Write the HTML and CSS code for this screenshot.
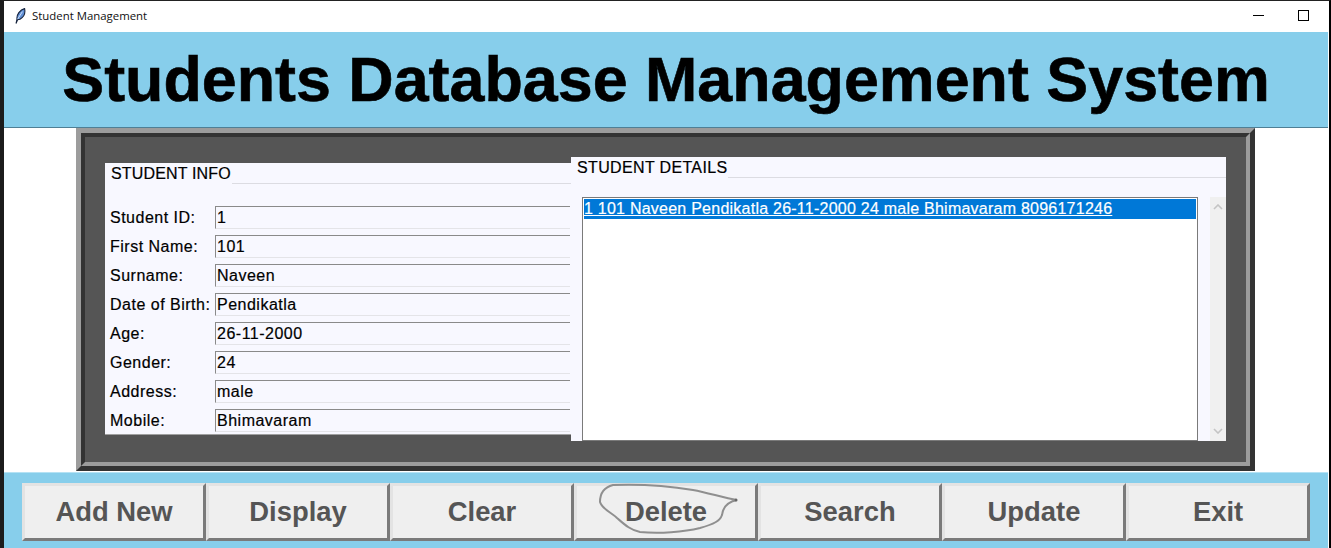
FILE: index.html
```html
<!DOCTYPE html>
<html lang="en">
<head>
  <meta charset="UTF-8">
  <meta name="viewport" content="width=device-width, initial-scale=1.0">
  <title>Student Management</title>
  <link rel="stylesheet" href="styles.css">
</head>
<body>
  <div class="window">
    <div class="titlebar">
      <svg class="feather" viewBox="0 0 12 16" width="12" height="16">
        <path d="M2 15.5 L3 11 C2.4 7 6 1.6 10.6 0.6 C11.4 4.5 10 9 6 11.2 L3.6 11.8 Z" fill="#5f8fd6" stroke="#16233c" stroke-width="1.1"/>
        <path d="M3.6 11.2 L8.4 3.6" stroke="#cfe0f7" stroke-width="1" fill="none"/>
      </svg>
      <span class="app-name">Student Management</span>
      <div class="window-controls">
        <span class="minimize"></span>
        <span class="maximize"></span>
      </div>
    </div>

    <div class="header">
      <h1>Students Database Management System</h1>
    </div>

    <div class="main">
      <div class="frame">
        <div class="group info">
          <div class="group-head"><span class="group-title">STUDENT INFO</span></div>
          <div class="fields">
            <label class="field-label">Student ID:</label><div class="entry">1</div>
            <label class="field-label">First Name:</label><div class="entry">101</div>
            <label class="field-label">Surname:</label><div class="entry">Naveen</div>
            <label class="field-label">Date of Birth:</label><div class="entry">Pendikatla</div>
            <label class="field-label">Age:</label><div class="entry">26-11-2000</div>
            <label class="field-label">Gender:</label><div class="entry">24</div>
            <label class="field-label">Address:</label><div class="entry">male</div>
            <label class="field-label">Mobile:</label><div class="entry">Bhimavaram</div>
          </div>
        </div>

        <div class="group details">
          <div class="group-head"><span class="group-title">STUDENT DETAILS</span></div>
          <div class="list-wrap">
            <div class="listbox">
              <div class="list-row">1 101 Naveen Pendikatla 26-11-2000 24 male Bhimavaram 8096171246</div>
            </div>
            <div class="scrollbar">
              <svg viewBox="0 0 10 6" width="10" height="6"><path d="M1 5 L5 1 L9 5" fill="none" stroke="#c4c4c4" stroke-width="1.6"/></svg>
              <svg viewBox="0 0 10 6" width="10" height="6"><path d="M1 1 L5 5 L9 1" fill="none" stroke="#c4c4c4" stroke-width="1.6"/></svg>
            </div>
          </div>
        </div>
      </div>
    </div>

    <div class="buttons">
      <button class="btn">Add New</button>
      <button class="btn">Display</button>
      <button class="btn">Clear</button>
      <button class="btn">Delete
        <svg class="scribble" viewBox="0 0 184 58" width="184" height="58">
          <path d="M163 17 C150 15 135 10 119 7 C95 3 65 1 39 2 C31 4 26 10 26 19 C28 26 38 30 43 35 C50 41 56 47 66 49 C85 51 110 49 126 45 C140 41 146 38 148 32 C149 24 153 19 163 17" fill="none" stroke="#8f8f8f" stroke-width="2"/>
          <circle cx="162" cy="17" r="1.5" fill="#666"/>
        </svg>
      </button>
      <button class="btn">Search</button>
      <button class="btn">Update</button>
      <button class="btn">Exit</button>
    </div>
  </div>
</body>
</html>
```

FILE: styles.css
```css
html, body {
  margin: 0;
  padding: 0;
  height: 100%;
  overflow: hidden;
}

body {
  font-family: "Liberation Sans", Arial, sans-serif;
  background: #fff;
  color: #000;
}

.window {
  display: flex;
  flex-direction: column;
  width: 1331px;
  height: 548px;
  box-sizing: border-box;
  border-left: 4px solid #1c1c1c;
  border-right: 2px solid #000;
  border-top: 1px solid #222;
  background: #fff;
}

.titlebar {
  display: flex;
  align-items: center;
  height: 31px;
  flex: none;
  padding-left: 10px;
  background: #fff;
}

.feather {
  margin-right: 6px;
  margin-top: -2px;
}

.app-name {
  font-family: "Open Sans", sans-serif;
  font-size: 11.4px;
  color: #111;
  margin-top: -2px;
}

.window-controls {
  display: flex;
  align-items: center;
  margin-left: auto;
  margin-right: 20px;
  margin-top: -2px;
  gap: 34px;
}

.minimize {
  width: 11px;
  height: 1px;
  background: #000;
}

.maximize {
  width: 9px;
  height: 9px;
  border: 1px solid #000;
}

.header {
  flex: none;
  height: 95px;
  margin-right: 1px;
  background: #87ceeb;
  border-bottom: 1px solid #4f7f95;
  display: flex;
  align-items: center;
  justify-content: center;
}

.header h1 {
  margin: 0;
  margin-top: -1px;
  font-size: 62.8px;
  line-height: 1;
  font-weight: bold;
  color: #000;
  -webkit-text-stroke: 0.6px #000;
}

.main {
  flex: none;
  height: 344px;
  padding-left: 72px;
}

.frame {
  position: relative;
  width: 1179px;
  height: 343px;
  box-sizing: border-box;
  display: flex;
  align-items: flex-start;
  padding: 24px 0 0 24px;
  background: #555;
  border: 5px solid #9c9c9c;
  border-right-color: #333;
  border-bottom-color: #333;
}

.frame::before {
  content: "";
  position: absolute;
  top: 0;
  left: 0;
  right: 0;
  bottom: 0;
  border: 4px solid #333;
  border-right-color: #9c9c9c;
  border-bottom-color: #9c9c9c;
  pointer-events: none;
}

.group {
  background: #f8f8ff;
  flex: none;
  display: flex;
  flex-direction: column;
  box-sizing: border-box;
}

.group-head {
  height: 20px;
  border-bottom: 1px solid #dcdce2;
  flex: none;
}

.group-title {
  display: inline-block;
  height: 21px;
  padding: 1px 1px 0 6px;
  font-size: 16px;
  line-height: 20px;
  letter-spacing: 0.15px;
  background: #f8f8ff;
  -webkit-text-stroke: 0.2px #000;
}

.details .group-title {
  letter-spacing: 0.35px;
}

.info {
  width: 466px;
  height: 272px;
  margin-top: 6px;
  border-bottom: 1px solid #a0a0a0;
}

.fields {
  display: grid;
  grid-template-columns: 105px 1fr;
  grid-auto-rows: 29px;
  padding: 22px 1px 0 5px;
}

.field-label {
  font-size: 16px;
  line-height: 23px;
  letter-spacing: 0.5px;
  white-space: nowrap;
  -webkit-text-stroke: 0.2px #000;
}

.entry {
  height: 23px;
  box-sizing: border-box;
  padding-left: 1px;
  font-size: 16px;
  line-height: 21px;
  letter-spacing: 0.5px;
  border-top: 1px solid #8a8a8a;
  border-left: 1px solid #8a8a8a;
  border-bottom: 1px solid #e4e4e8;
  background: #f8f8ff;
  -webkit-text-stroke: 0.2px #000;
}

.details {
  width: 655px;
  height: 284px;
}

.list-wrap {
  display: flex;
  flex: 1;
  padding: 19px 0 0 11px;
}

.listbox {
  width: 616px;
  box-sizing: border-box;
  background: #fff;
  border: 1px solid #7a7a7a;
  padding: 1px;
}

.list-row {
  height: 20px;
  line-height: 20px;
  background: #0078d7;
  color: #fff;
  font-size: 16px;
  letter-spacing: 0.24px;
  text-decoration: underline;
  white-space: nowrap;
  -webkit-text-stroke: 0.2px #fff;
}

.scrollbar {
  width: 16px;
  margin-left: 12px;
  background: #f0f0f0;
  display: flex;
  flex-direction: column;
  justify-content: space-between;
  align-items: center;
  padding: 7px 0;
  box-sizing: border-box;
}

.buttons {
  flex: 1;
  display: flex;
  margin-right: 1px;
  padding: 10px 0 0 18px;
  background: #87ceeb;
  border-top: 1px solid #b5e2f4;
}

.btn {
  position: relative;
  width: 184px;
  height: 58px;
  padding: 0;
  box-sizing: border-box;
  background: #efefef;
  border: 3px solid #e3e3e3;
  border-right-color: #7a7a7a;
  border-bottom-color: #7a7a7a;
  font-family: inherit;
  font-size: 27.4px;
  font-weight: bold;
  color: #555;
}

.scribble {
  position: absolute;
  top: -3px;
  left: -3px;
  pointer-events: none;
}
```
